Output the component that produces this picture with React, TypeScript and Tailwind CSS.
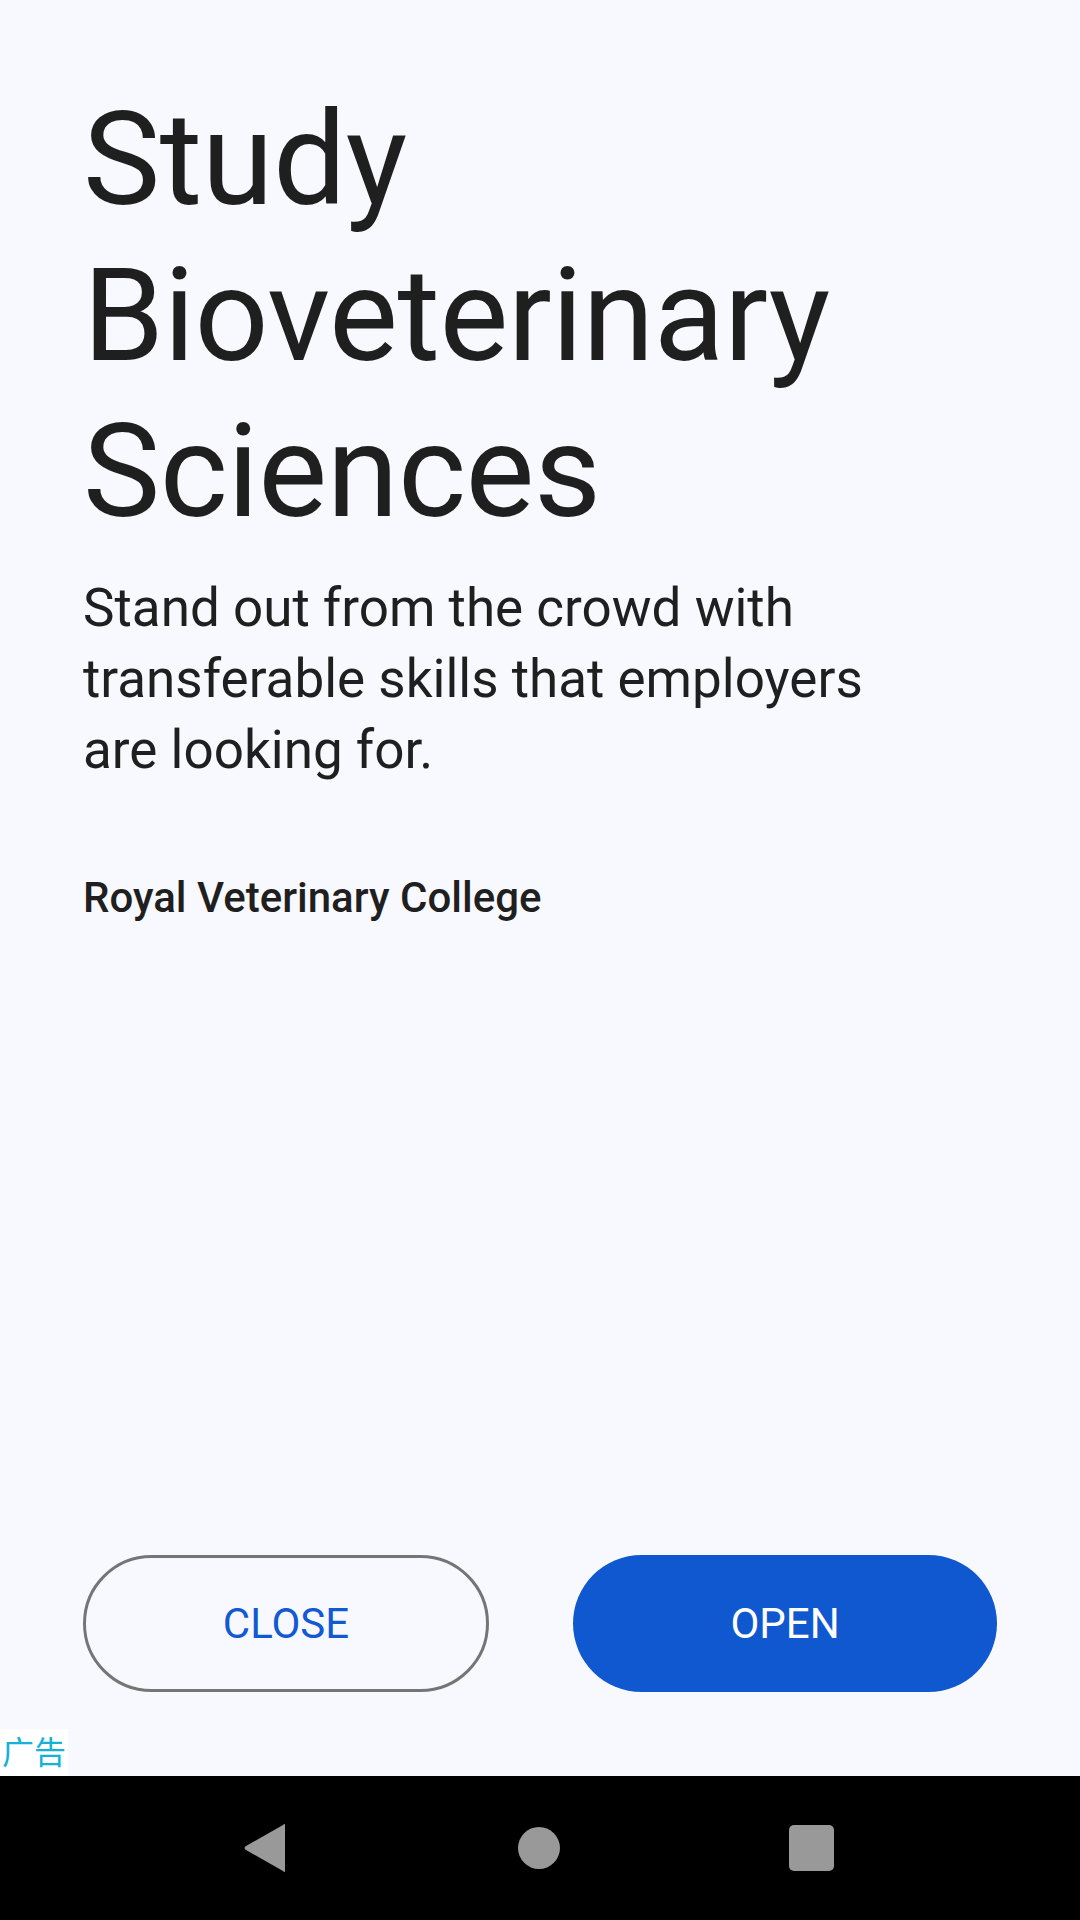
export default function App() {
  return (
    <div
      className="flex h-[1920px] w-[1080px] flex-col bg-[#f8f9fe] text-[#1f1f1f]"
      style={{ fontFamily: 'Roboto, "Noto Sans CJK SC", sans-serif' }}
    >
      <main className="flex flex-1 flex-col">
        <div className="px-[83px] pt-[82px]">
          <h1 className="text-[130px] font-normal leading-[156px] tracking-[-0.5px]">
            Study
            <br />
            Bioveterinary
            <br />
            Sciences
          </h1>
          <p className="mt-[23px] w-[900px] text-[53px] leading-[71px]">
            Stand out from the crowd with
            <br />
            transferable skills that employers
            <br />
            are looking for.
          </p>
          <p className="mt-[86px] text-[42px] font-medium leading-[52px]">Royal Veterinary College</p>
        </div>

        <div className="mt-auto flex items-center justify-between px-[83px]">
          <button className="flex h-[137px] w-[406px] items-center justify-center rounded-full border-[3px] border-[#757575] text-[42px] text-[#1259d2]">
            CLOSE
          </button>
          <button className="flex h-[137px] w-[424px] items-center justify-center rounded-full bg-[#0f58cf] text-[42px] text-white">
            OPEN
          </button>
        </div>

        <div className="mt-[37px] flex h-[47px] w-[68px] items-center justify-center bg-white text-[32px] text-[#14b2d6]">
          广告
        </div>
      </main>

      <nav className="flex h-[144px] items-center bg-black">
        <div className="flex w-full items-center">
          <svg className="ml-[242px]" width="46" height="52" viewBox="0 0 46 52">
            <path d="M43 3 L43 49 Q43 51 41 49 L4 28 Q1 26 4 24 L41 3 Q43 1 43 3 Z" fill="#999999" />
          </svg>
          <div className="ml-[230px] h-[42px] w-[42px] rounded-full bg-[#999999]" />
          <div className="ml-[229px] h-[46px] w-[45px] rounded-[5px] bg-[#999999]" />
        </div>
      </nav>
    </div>
  );
}
